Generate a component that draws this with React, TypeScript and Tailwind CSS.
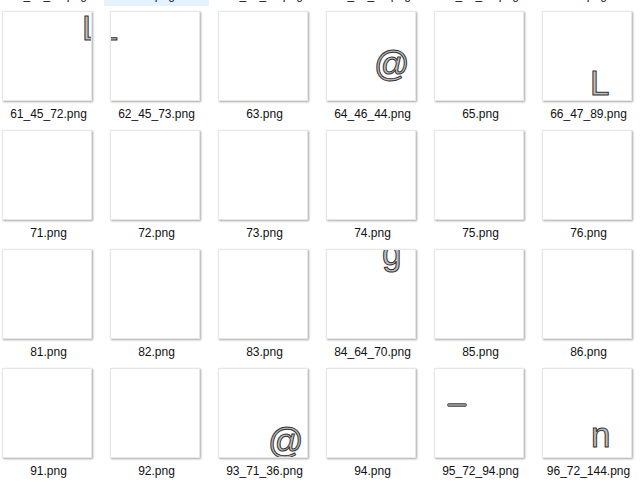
import React from "react";

type GlyphSpec = { ch: string; left: number; top: number };

const rows: string[][] = [
  ["51_45_70.png", "52.png", "53_45_71.png", "54_46_43.png", "55_46_88.png", "56.png"],
  ["61_45_72.png", "62_45_73.png", "63.png", "64_46_44.png", "65.png", "66_47_89.png"],
  ["71.png", "72.png", "73.png", "74.png", "75.png", "76.png"],
  ["81.png", "82.png", "83.png", "84_64_70.png", "85.png", "86.png"],
  ["91.png", "92.png", "93_71_36.png", "94.png", "95_72_94.png", "96_72_144.png"],
];

const glyphs: Record<string, GlyphSpec> = {
  "61_45_72.png": { ch: "L", left: 79, top: -2 },
  "62_45_73.png": { ch: "_", left: -14, top: -9 },
  "64_46_44.png": { ch: "@", left: 47, top: 34 },
  "66_47_89.png": { ch: "L", left: 47, top: 53 },
  "84_64_70.png": { ch: "g", left: 55, top: -15 },
  "93_71_36.png": { ch: "@", left: 49, top: 54 },
  "96_72_144.png": { ch: "n", left: 48, top: 48 },
};

function Thumb({ name }: { name: string }) {
  const g = glyphs[name];
  return (
    <div className="relative ml-[6px] h-[90px] w-[90px] shrink-0 overflow-hidden border border-[#e6e6e6] bg-white shadow-[1px_1px_2px_rgba(0,0,0,0.35)]">
      {g && (
        <span
          className="absolute whitespace-pre font-['Liberation_Sans',Arial,sans-serif] text-[35px] leading-[35px] text-[#bdbdbd] antialiased [-webkit-text-stroke:1px_#333333]"
          style={{ left: g.left, top: g.top }}
        >
          {g.ch}
        </span>
      )}
      {name === "95_72_94.png" && (
        <div className="absolute left-[12px] top-[34px] h-[4px] w-[20px] rounded-[2px] border border-[#666666] bg-[#8c8c8c]" />
      )}
    </div>
  );
}

export default function App() {
  return (
    <div className="h-[486px] w-[643px] overflow-hidden bg-white font-['Liberation_Sans',Arial,sans-serif]">
      <div className="-ml-[4px] -mt-[111px] grid grid-cols-[repeat(6,105px)] gap-x-[3px] gap-y-[2px]">
        {rows.map((row, r) =>
          row.map((name, c) => (
            <div
              key={name}
              className={
                "flex h-[117px] flex-col items-start pt-[3px] pb-[3px] " +
                (r === 0 && c === 1 ? "bg-[#e5f3ff]" : "")
              }
            >
              <Thumb name={name} />
              <div className="mt-[5px] w-full text-center text-[12px] leading-[16px] text-[#111111]">
                {name}
              </div>
            </div>
          ))
        )}
      </div>
    </div>
  );
}
